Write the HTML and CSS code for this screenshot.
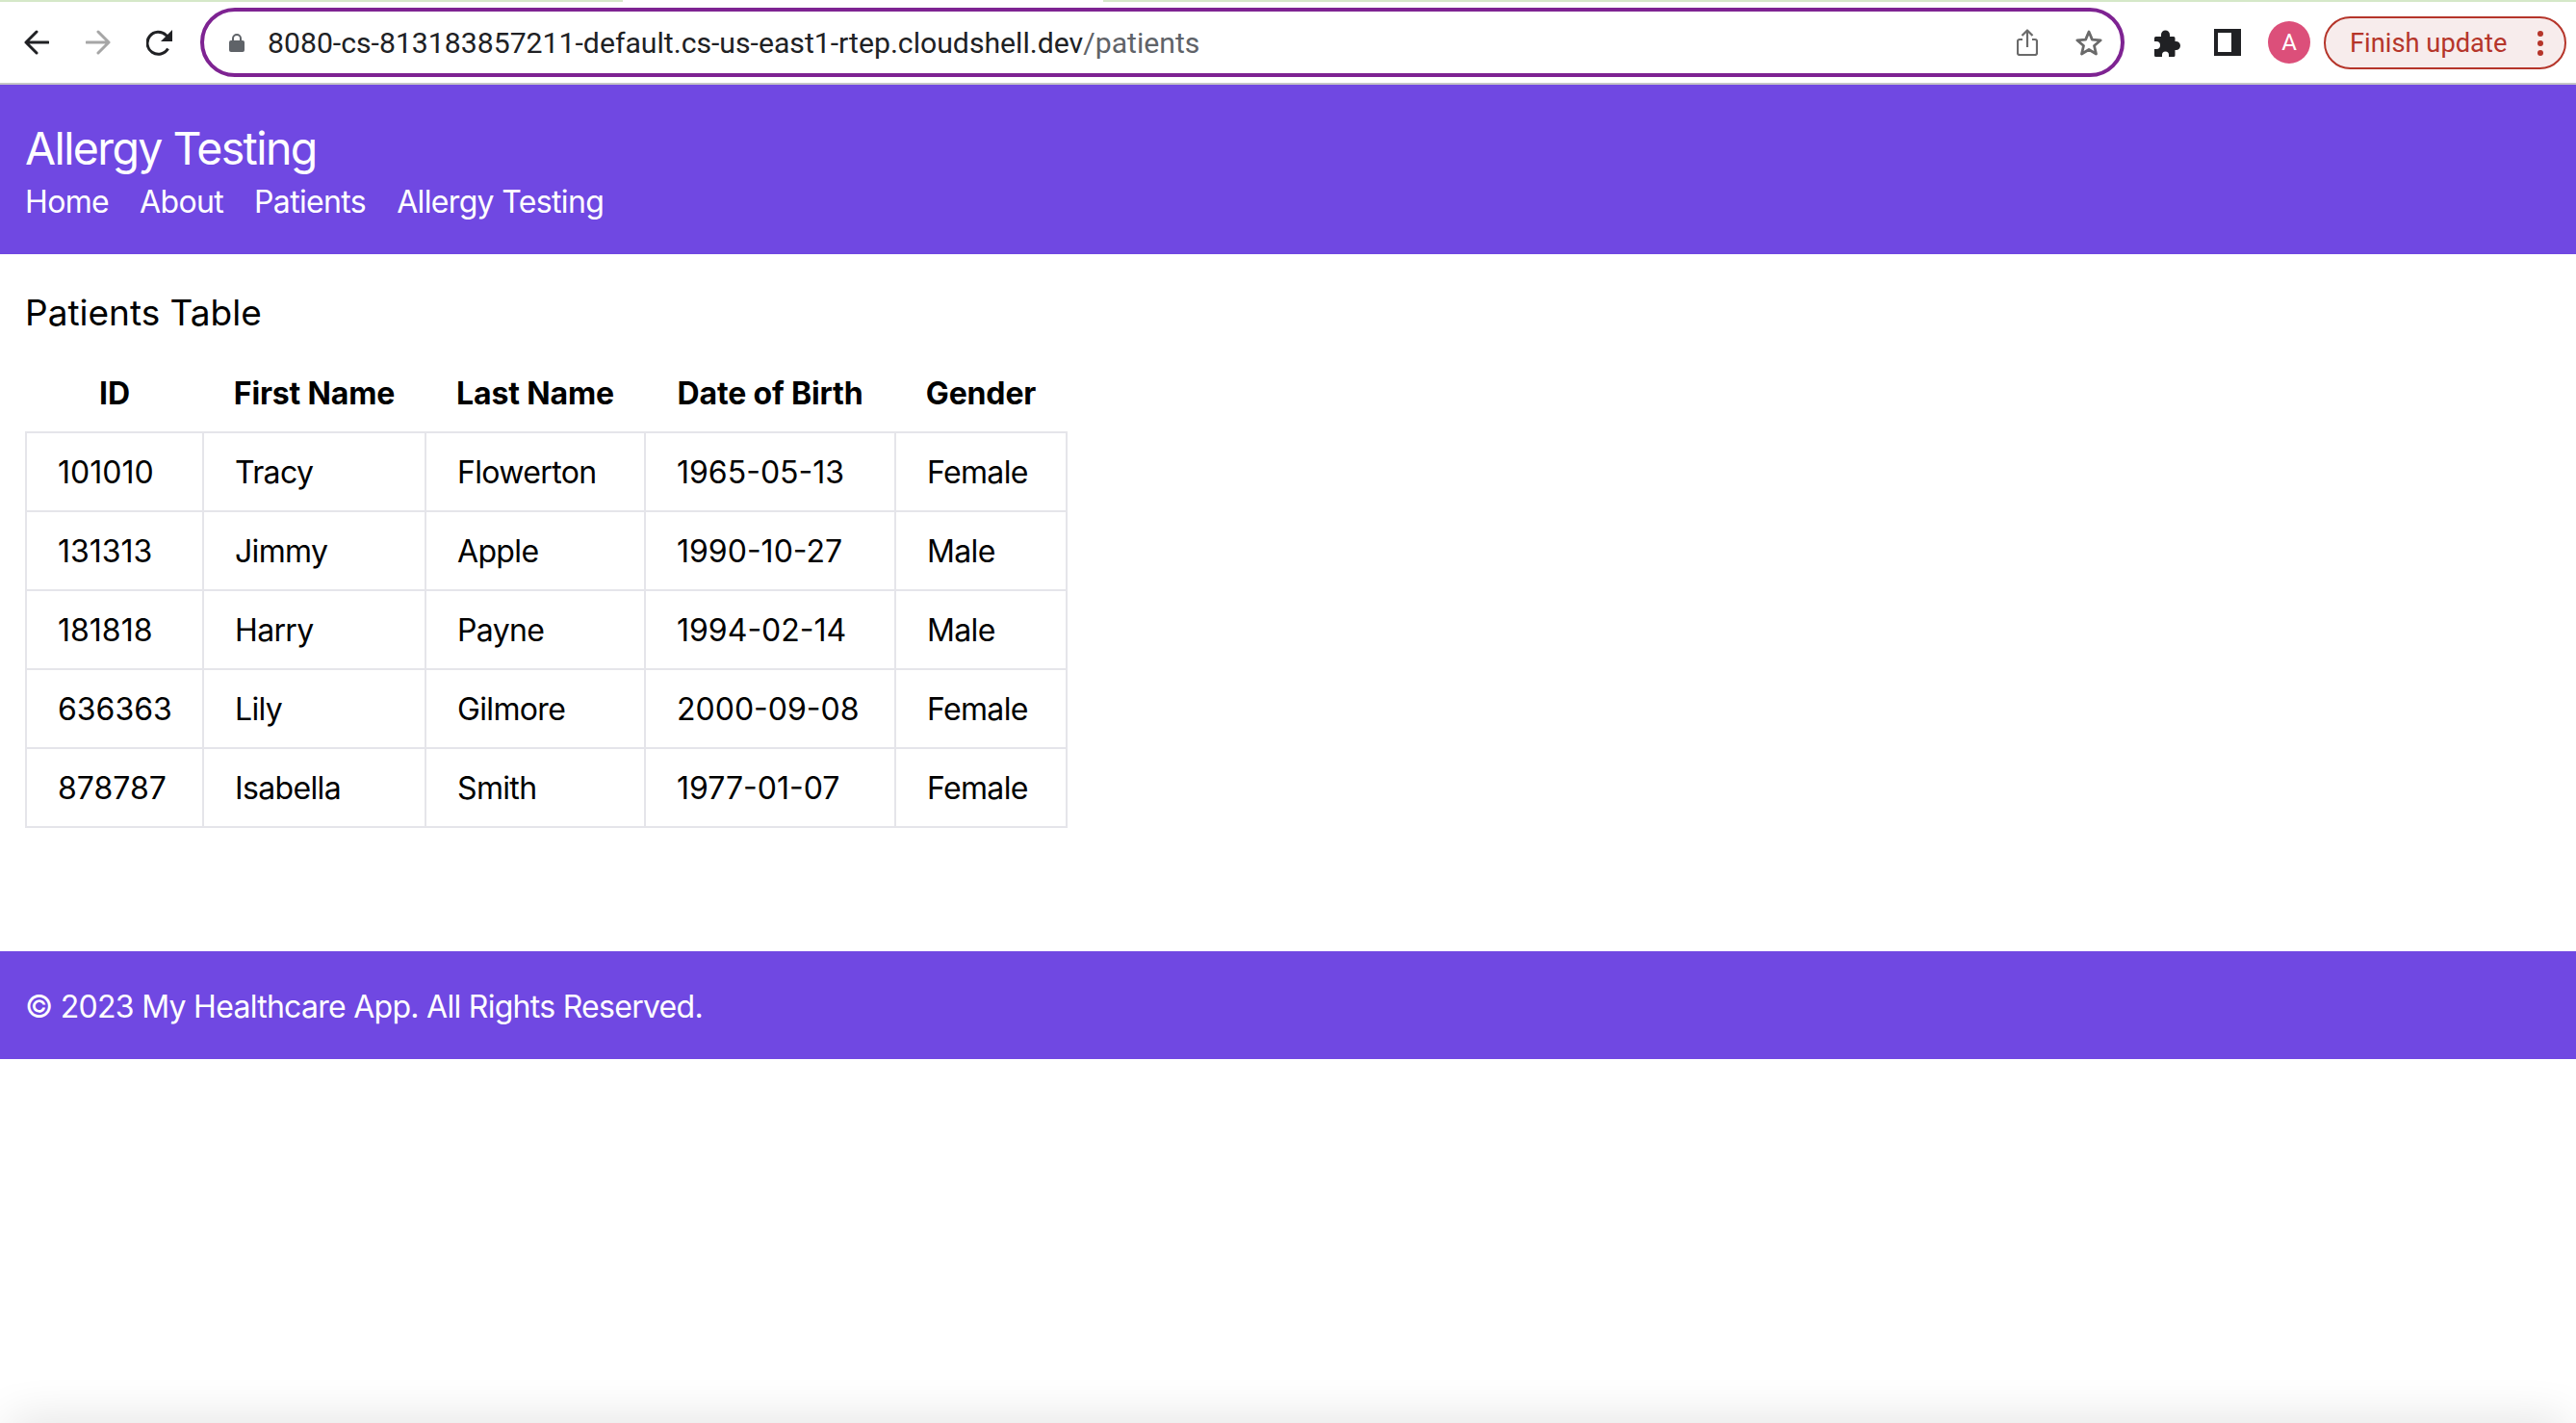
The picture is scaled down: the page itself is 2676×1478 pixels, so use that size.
FILE: index.html
```html
<!DOCTYPE html>
<html lang="en">
<head>
<meta charset="UTF-8">
<title>Patients</title>
<link rel="stylesheet" href="styles.css">
</head>
<body>

<div class="tabstrip">
    <div class="tabstrip-left"></div>
    <div class="tabstrip-right"></div>
</div>

<div class="toolbar">
    <svg class="nav-icon" viewBox="0 0 26 26"><path d="M25 13H2M13 2L2 13l11 11" fill="none" stroke="#202124" stroke-width="3" stroke-linecap="round" stroke-linejoin="round"/></svg>
    <svg class="nav-icon forward" viewBox="0 0 26 26"><path d="M1 13h23M13 2l11 11-11 11" fill="none" stroke="#a6a6a6" stroke-width="3" stroke-linecap="round" stroke-linejoin="round"/></svg>
    <svg class="nav-icon reload" viewBox="0 0 28 28"><path d="M22.5 20.5A11.5 11.5 0 1 1 20.5 6.5L23 9" fill="none" stroke="#202124" stroke-width="3"/><path d="M27 1v12H15z" fill="#202124"/></svg>

    <div class="urlbar">
        <svg class="lock" viewBox="0 0 16 20"><path d="M4 9V6a4 4 0 0 1 8 0v3" fill="none" stroke="#5f6368" stroke-width="2"/><rect x="0" y="8" width="16" height="12" rx="2" fill="#5f6368"/></svg>
        <div class="url">8080-cs-813183857211-default.cs-us-east1-rtep.cloudshell.dev<span class="url-path">/patients</span></div>
        <svg class="share" viewBox="0 0 22 28"><path d="M6 11H3a2 2 0 0 0-2 2v12a2 2 0 0 0 2 2h16a2 2 0 0 0 2-2V13a2 2 0 0 0-2-2h-3M11 19V2M5.500 7L11 1.500 16.500 7" fill="none" stroke="#6a6a6a" stroke-width="2.200" stroke-linejoin="round"/></svg>
        <svg class="star" viewBox="0 0 30 28"><path d="M15 3l3.400 8.100 8.800.7-6.700 5.700 2 8.500L15 21.500 7.500 26l2-8.500L2.800 11.800l8.800-.7z" fill="none" stroke="#6a6a6a" stroke-width="2.800" stroke-linejoin="round"/></svg>
    </div>

    <svg class="puzzle" viewBox="0 0 29 29"><path d="M2 9.500a1.500 1.500 0 0 1 1.500-1.500H9V6a4.500 4.500 0 0 1 9 0v2h4a1.500 1.500 0 0 1 1.500 1.500V13h1a4.500 4.500 0 0 1 0 9h-1v5.500A1.500 1.500 0 0 1 22 29h-5v-2a3.500 3.500 0 0 0-7 0v2H3.500A1.500 1.500 0 0 1 2 27.500V21h2a4 4 0 0 0 0-8H2z" fill="#202124"/></svg>
    <div class="sidepanel"></div>
    <div class="avatar">A</div>
    <div class="update">
        <span>Finish update</span>
        <div class="dots"><i></i><i></i><i></i></div>
    </div>
</div>

<header class="site-header">
    <h1>Allergy Testing</h1>
    <nav class="site-nav">
        <a href="#">Home</a>
        <a href="#">About</a>
        <a href="#">Patients</a>
        <a href="#">Allergy Testing</a>
    </nav>
</header>

<main class="content">
    <h2>Patients Table</h2>
    <table class="patients">
        <colgroup>
            <col class="col-id">
            <col class="col-first">
            <col class="col-last">
            <col class="col-dob">
            <col class="col-gender">
        </colgroup>
        <thead>
            <tr>
                <th>ID</th>
                <th>First Name</th>
                <th>Last Name</th>
                <th>Date of Birth</th>
                <th>Gender</th>
            </tr>
        </thead>
        <tbody>
            <tr><td>101010</td><td class="word">Tracy</td><td class="word">Flowerton</td><td>1965-05-13</td><td class="word">Female</td></tr>
            <tr><td>131313</td><td class="word">Jimmy</td><td class="word">Apple</td><td>1990-10-27</td><td class="word">Male</td></tr>
            <tr><td>181818</td><td class="word">Harry</td><td class="word">Payne</td><td>1994-02-14</td><td class="word">Male</td></tr>
            <tr><td>636363</td><td class="word">Lily</td><td class="word">Gilmore</td><td>2000-09-08</td><td class="word">Female</td></tr>
            <tr><td>878787</td><td class="word">Isabella</td><td class="word">Smith</td><td>1977-01-07</td><td class="word">Female</td></tr>
        </tbody>
    </table>
</main>

<footer class="site-footer">© 2023 My Healthcare App. All Rights Reserved.</footer>

<div class="window-shadow"></div>

</body>
</html>
```

FILE: styles.css
```css
html, body {
    height: 100%;
}
body {
    margin: 0;
    background: #fff;
    color: #000;
    font-family: Inter, sans-serif;
    overflow: hidden;
}

/* browser chrome */
.tabstrip {
    display: flex;
    justify-content: space-between;
    height: 2px;
}
.tabstrip-left {
    width: 647px;
    background: #d5e8c8;
}
.tabstrip-right {
    width: 1530px;
    background: #d5e8c8;
}
.toolbar {
    display: flex;
    align-items: center;
    height: 84px;
    border-bottom: 2px solid #c6c6c6;
    padding-left: 25px;
}
.nav-icon {
    width: 26px;
    height: 26px;
    flex: none;
}
.forward {
    margin-left: 38px;
}
.reload {
    width: 28px;
    height: 28px;
    margin-left: 37px;
}
.urlbar {
    display: flex;
    align-items: center;
    width: 1999px;
    height: 72px;
    box-sizing: border-box;
    margin-left: 28px;
    padding-left: 26px;
    border: 4px solid #7e2392;
    border-radius: 36px;
    flex: none;
}
.lock {
    width: 16px;
    height: 20px;
    flex: none;
}
.url {
    margin-left: 24px;
    width: 1817px;
    font-family: Roboto, sans-serif;
    font-size: 30.2px;
    color: #202124;
    white-space: nowrap;
    flex: none;
}
.url-path {
    color: #5f6368;
}
.share {
    width: 22px;
    height: 28px;
    flex: none;
}
.star {
    width: 30px;
    height: 28px;
    margin-left: 38px;
    flex: none;
}
.puzzle {
    width: 29px;
    height: 29px;
    margin-left: 29px;
    flex: none;
}
.sidepanel {
    width: 14px;
    height: 20px;
    margin-left: 35px;
    flex: none;
    background: #fff;
    border: solid #202124;
    border-width: 4px 10px 4px 4px;
}
.avatar {
    width: 44px;
    height: 44px;
    margin-left: 28px;
    border-radius: 50%;
    background: #dc4f7a;
    color: #fff;
    font-family: Roboto, sans-serif;
    font-size: 24px;
    line-height: 44px;
    text-align: center;
    flex: none;
}
.update {
    display: flex;
    align-items: center;
    justify-content: space-between;
    width: 252px;
    height: 55px;
    box-sizing: border-box;
    margin-left: 14px;
    padding: 1px 22px 0 25px;
    border: 2px solid #b5352a;
    border-radius: 28px;
    background: #f7ecec;
    color: #b5352a;
    font-family: Roboto, sans-serif;
    font-size: 27.3px;
    flex: none;
}
.dots {
    display: flex;
    flex-direction: column;
    gap: 4px;
}
.dots i {
    display: block;
    width: 6px;
    height: 6px;
    border-radius: 50%;
    background: #b5352a;
}

/* page */
.site-header {
    background: #7048e2;
    color: #fff;
    height: 176px;
    padding: 38px 26px 0;
    box-sizing: border-box;
}
h1 {
    margin: 0;
    font-size: 46.5px;
    font-weight: 400;
    letter-spacing: -1.6px;
    line-height: 56px;
}
.site-nav {
    display: flex;
    gap: 32px;
    margin-top: 8px;
}
.site-nav a {
    color: #fff;
    font-size: 32px;
    letter-spacing: -0.65px;
    line-height: 40px;
    text-decoration: none;
}
.content {
    padding: 40px 26px 0;
    height: 724px;
    box-sizing: border-box;
}
h2 {
    margin: 0;
    font-size: 37px;
    font-weight: 400;
    line-height: 42px;
}
.patients {
    margin-top: 22px;
    border-collapse: collapse;
    table-layout: fixed;
    width: 1081px;
}
.col-id { width: 184px; }
.col-first { width: 231px; }
.col-last { width: 228px; }
.col-dob { width: 260px; }
.col-gender { width: 178px; }
.patients th,
.patients td {
    font-size: 32px;
    line-height: 48px;
    padding: 17px 32px 15px;
}
.patients th {
    font-weight: 700;
    letter-spacing: -0.15px;
    padding: 17px 0 15px;
    text-align: center;
}
.patients td {
    border: 2px solid #e5e5ea;
}
.patients td.word {
    letter-spacing: -0.65px;
}
.site-footer {
    background: #7048e2;
    color: #fff;
    height: 112px;
    box-sizing: border-box;
    display: flex;
    align-items: center;
    padding: 2px 0 0 26px;
    font-size: 32px;
    letter-spacing: -0.72px;
}
.window-shadow {
    position: fixed;
    left: 10px;
    right: 10px;
    bottom: -40px;
    height: 40px;
    box-shadow: 0 0 50px rgba(0,0,0,0.14);
}
```
